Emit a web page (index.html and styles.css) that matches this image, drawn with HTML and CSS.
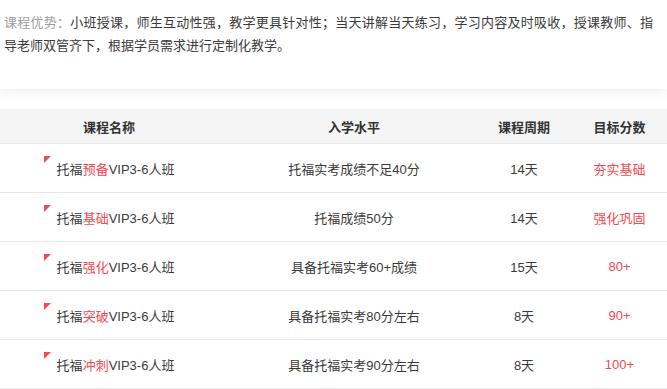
FILE: index.html
```html
<!DOCTYPE html>
<html lang="zh-CN">
<head>
<meta charset="utf-8">
<link rel="stylesheet" href="styles.css">
</head>
<body>
<div class="intro">
  <p class="intro-text"><span class="label">课程优势：</span>小班授课，师生互动性强，教学更具针对性；当天讲解当天练习，学习内容及时吸收，授课教师、指导老师双管齐下，根据学员需求进行定制化教学。</p>
</div>
<div class="table">
  <div class="row head">
    <div class="c1">课程名称</div><div class="c2">入学水平</div><div class="c3">课程周期</div><div class="c4">目标分数</div>
  </div>
  <div class="row">
    <div class="c1"><span class="tri"></span>托福<em>预备</em>VIP3-6人班</div><div class="c2">托福实考成绩不足40分</div><div class="c3">14天</div><div class="c4 red">夯实基础</div>
  </div>
  <div class="row">
    <div class="c1"><span class="tri"></span>托福<em>基础</em>VIP3-6人班</div><div class="c2">托福成绩50分</div><div class="c3">14天</div><div class="c4 red">强化巩固</div>
  </div>
  <div class="row">
    <div class="c1"><span class="tri"></span>托福<em>强化</em>VIP3-6人班</div><div class="c2">具备托福实考60+成绩</div><div class="c3">15天</div><div class="c4 red">80+</div>
  </div>
  <div class="row">
    <div class="c1"><span class="tri"></span>托福<em>突破</em>VIP3-6人班</div><div class="c2">具备托福实考80分左右</div><div class="c3">8天</div><div class="c4 red">90+</div>
  </div>
  <div class="row">
    <div class="c1"><span class="tri"></span>托福<em>冲刺</em>VIP3-6人班</div><div class="c2">具备托福实考90分左右</div><div class="c3">8天</div><div class="c4 red">100+</div>
  </div>
</div>
</body>
</html>
```
FILE: styles.css
```css
html, body {
  margin: 0;
  padding: 0;
  background: #fff;
  overflow: hidden;
}
body {
  font-family: "Liberation Sans", "Noto Sans CJK SC", sans-serif;
  font-size: 13px;
  color: #333;
}
.intro {
  height: 89px;
  padding: 11px 14px 0 4px;
  box-sizing: border-box;
  background: #fff;
  box-shadow: 0 4px 10px rgba(0, 0, 0, 0.06);
  position: relative;
}
.intro-text {
  margin: 0;
  line-height: 23px;
  text-align: justify;
  color: #3a3a3a;
}
.label {
  color: #a0a0a0;
}
.table {
  margin-top: 20px;
  width: 681px;
}
.row {
  display: grid;
  grid-template-columns: 218px 272px 68px 123px;
  height: 49px;
  align-items: center;
  border-bottom: 1px solid #e8e8e8;
  box-sizing: border-box;
  color: #3a3a3a;
}
.row > div {
  text-align: center;
  white-space: nowrap;
}
.row.head {
  height: 35px;
  background: #f5f5f5;
  font-weight: bold;
  color: #333;
}
.tri {
  display: inline-block;
  width: 0;
  height: 0;
  border-top: 7px solid #f5484f;
  border-right: 7px solid transparent;
  vertical-align: top;
  margin-top: -3px;
  margin-right: 6px;
}
em {
  font-style: normal;
  color: #f5484f;
}
.red {
  color: #f5484f;
}
```
